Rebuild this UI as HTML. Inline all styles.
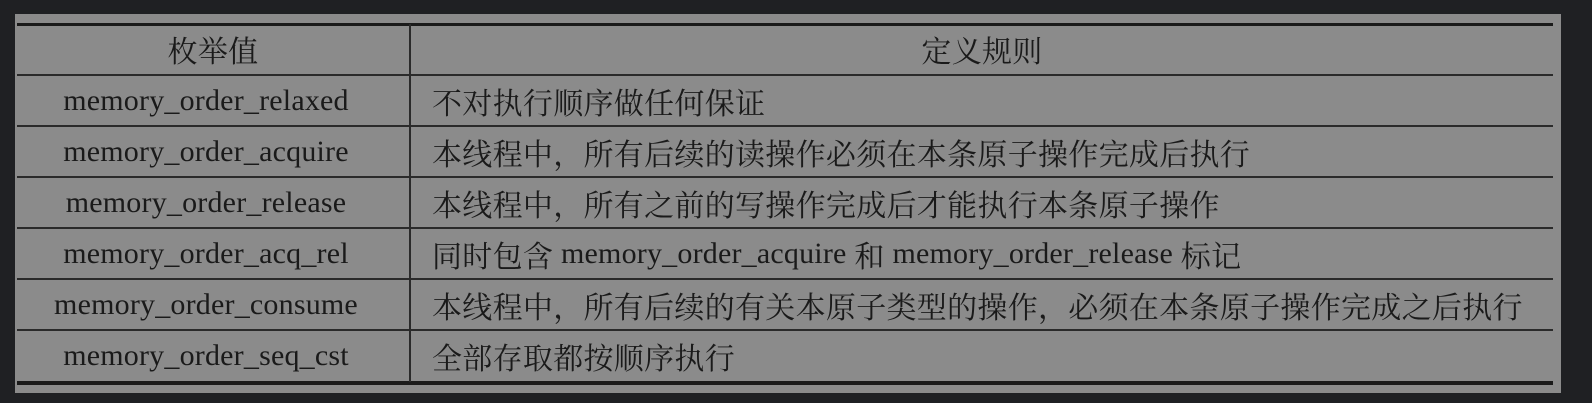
<!DOCTYPE html>
<html><head><meta charset="utf-8"><style>
html,body{margin:0;padding:0;background:#1f2023;width:1592px;height:403px;overflow:hidden;position:relative}
.panel{position:absolute;left:15px;top:14px;width:1546px;height:379px;background:#8b8b8b}
.hl{position:absolute;left:17px;width:1536px;height:2px;background:#2a2a2a}
.vl{position:absolute;left:409px;top:24px;width:2px;height:358px;background:#2a2a2a}
.c{position:absolute;height:50px;display:flex;align-items:center;font-family:"Liberation Serif","Noto Serif CJK SC",serif;font-size:30px;letter-spacing:0.3px;color:#1a1a1a;white-space:nowrap}
.a{left:17px;width:378px;justify-content:center}
.b{left:432px}
.h{left:411px;width:1142px;justify-content:center}
.m{font-size:30px;letter-spacing:0.2px}
</style></head><body><div class="panel"></div>
<div class="hl" style="top:23px;height:3px;background:#1a1a1a"></div>
<div class="hl" style="top:74px"></div>
<div class="hl" style="top:125px"></div>
<div class="hl" style="top:176px"></div>
<div class="hl" style="top:227px"></div>
<div class="hl" style="top:278px"></div>
<div class="hl" style="top:329px"></div>
<div class="hl" style="top:381px;height:4px;background:#1a1a1a"></div>
<div class="vl"></div>
<div class="c a" style="top:24px;width:392px">枚举值</div><div class="c h" style="top:24px">定义规则</div>
<div class="c a" style="top:76px"><span class="m">memory_order_relaxed</span></div><div class="c b" style="top:76px">不对执行顺序做任何保证</div>
<div class="c a" style="top:127px"><span class="m">memory_order_acquire</span></div><div class="c b" style="top:127px">本线程中，所有后续的读操作必须在本条原子操作完成后执行</div>
<div class="c a" style="top:178px"><span class="m">memory_order_release</span></div><div class="c b" style="top:178px">本线程中，所有之前的写操作完成后才能执行本条原子操作</div>
<div class="c a" style="top:229px"><span class="m">memory_order_acq_rel</span></div><div class="c b" style="top:229px">同时包含&nbsp;<span class="m">memory_order_acquire</span>&nbsp;和&nbsp;<span class="m">memory_order_release</span>&nbsp;标记</div>
<div class="c a" style="top:280px"><span class="m">memory_order_consume</span></div><div class="c b" style="top:280px">本线程中，所有后续的有关本原子类型的操作，必须在本条原子操作完成之后执行</div>
<div class="c a" style="top:331px"><span class="m">memory_order_seq_cst</span></div><div class="c b" style="top:331px">全部存取都按顺序执行</div>
</body></html>
